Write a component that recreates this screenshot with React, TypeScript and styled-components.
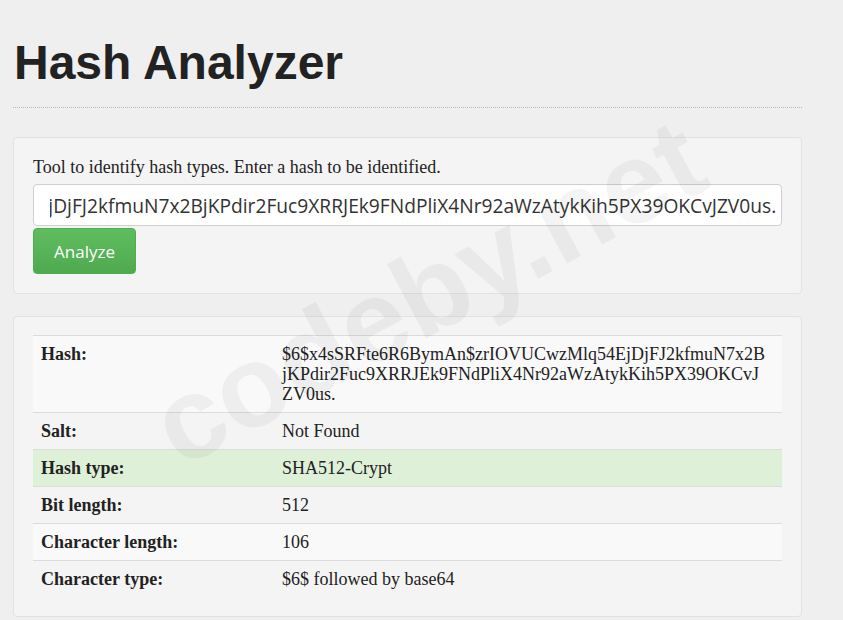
import styled, { createGlobalStyle } from "styled-components";
import { useEffect, useRef } from "react";

const HASH =
  "$6$x4sSRFte6R6BymAn$zrIOVUCwzMlq54EjDjFJ2kfmuN7x2BjKPdir2Fuc9XRRJEk9FNdPliX4Nr92aWzAtykKih5PX39OKCvJZV0us.";

const GlobalStyle = createGlobalStyle`
  html, body {
    margin: 0;
    padding: 0;
    background: #efefef;
    overflow: hidden;
  }
  body {
    font-family: "Liberation Serif", "Times New Roman", serif;
    color: #333;
  }
`;

const Page = styled.div`
  position: relative;
  width: 789px;
  padding: 0 13px;
  height: 620px;
  overflow: hidden;
`;

const Header = styled.div`
  padding: 36px 0 18px 1px;
  border-bottom: 1px dotted #b8b8b8;
`;

const Title = styled.h1`
  margin: 0;
  font-family: "Liberation Sans", Arial, sans-serif;
  font-weight: 700;
  font-size: 48px;
  line-height: 53px;
  color: #222;
`;

const Card = styled.div<{ $top: number; $padTop: number }>`
  margin-top: ${(p) => p.$top}px;
  background: #f4f4f4;
  border: 1px solid #e2e2e2;
  border-radius: 4px;
  padding: ${(p) => p.$padTop}px 19px 19px 19px;
`;

const Lead = styled.p`
  margin: 0 0 7px;
  font-size: 18px;
  line-height: 20px;
  color: #222;
`;

const HashInput = styled.input`
  display: block;
  box-sizing: border-box;
  width: 100%;
  height: 42px;
  padding: 0 5px 0 16px;
  border: 1px solid #cfcfcf;
  border-radius: 4px;
  background: #fff;
  font-family: "Open Sans", "Noto Sans", sans-serif;
  font-size: 19.2px;
  color: #333;
  outline: none;
`;

const AnalyzeButton = styled.button`
  display: block;
  margin-top: 2px;
  width: 103px;
  height: 46px;
  border: 1px solid #4cae4c;
  border-radius: 4px;
  background: linear-gradient(#5fbd5f, #4faa4f);
  color: #fff;
  font-family: "Open Sans", "Noto Sans", sans-serif;
  font-size: 17px;
  padding: 0;
`;

const Table = styled.table`
  width: 100%;
  border-collapse: collapse;
  font-size: 18px;
  line-height: 20px;
  color: #222;
`;

const Row = styled.tr<{ $bg?: string }>`
  background: ${(p) => p.$bg ?? "transparent"};
  border-top: 1px solid #dcdcdc;
`;

const Label = styled.th`
  width: 225px;
  padding: 8px;
  text-align: left;
  vertical-align: top;
  font-weight: 700;
`;

const Value = styled.td`
  padding: 8px 14px 8px 8px;
  vertical-align: top;
  word-break: break-all;
`;

const Watermark = styled.div`
  position: absolute;
  left: 428px;
  top: 292px;
  transform: translate(-50%, -50%) rotate(-28deg);
  font-family: "Liberation Sans", Arial, sans-serif;
  font-weight: 700;
  font-size: 116px;
  color: rgba(0, 0, 0, 0.045);
  white-space: nowrap;
  pointer-events: none;
`;

const rows: { label: string; value: string; bg?: string }[] = [
  { label: "Hash:", value: HASH, bg: "#f9f9f9" },
  { label: "Salt:", value: "Not Found" },
  { label: "Hash type:", value: "SHA512-Crypt", bg: "#dff0d8" },
  { label: "Bit length:", value: "512" },
  { label: "Character length:", value: "106", bg: "#f9f9f9" },
  { label: "Character type:", value: "$6$ followed by base64" },
];

export default function App() {
  const inputRef = useRef<HTMLInputElement>(null);

  useEffect(() => {
    const el = inputRef.current;
    if (el) el.scrollLeft = el.scrollWidth;
  }, []);

  return (
    <Page>
      <GlobalStyle />
      <Header>
        <Title>Hash Analyzer</Title>
      </Header>
      <Card $top={29} $padTop={19}>
        <Lead>Tool to identify hash types. Enter a hash to be identified.</Lead>
        <HashInput ref={inputRef} defaultValue={HASH} />
        <AnalyzeButton>Analyze</AnalyzeButton>
      </Card>
      <Card $top={22} $padTop={18}>
        <Table>
          <tbody>
            {rows.map((r) => (
              <Row key={r.label} $bg={r.bg}>
                <Label>{r.label}</Label>
                <Value>{r.value}</Value>
              </Row>
            ))}
          </tbody>
        </Table>
      </Card>
      <Watermark>codeby.net</Watermark>
    </Page>
  );
}
